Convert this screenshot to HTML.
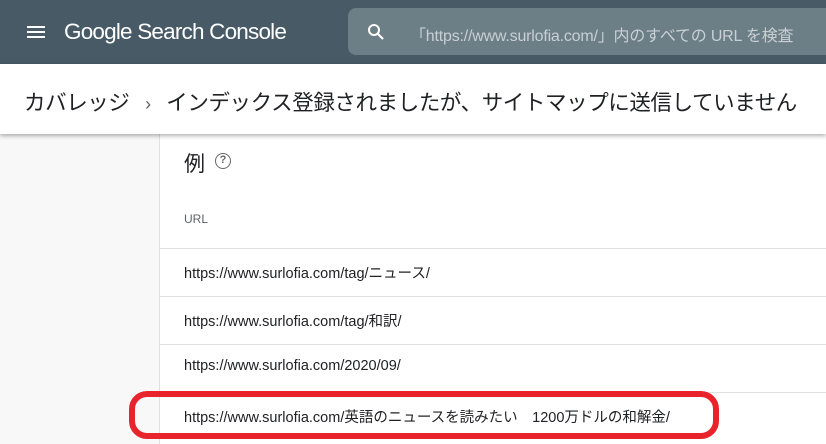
<!DOCTYPE html>
<html><head><meta charset="utf-8"><style>
*{margin:0;padding:0;box-sizing:border-box}
body{width:826px;height:440px;overflow:hidden;background:#f8f8f8;font-family:"Liberation Sans","Noto Sans CJK JP",sans-serif;position:relative}
.hdr{position:absolute;left:0;top:0;width:826px;height:64px;background:#475a65}
.menu{position:absolute;left:27px;top:26px;width:18px;height:12px;border-top:2px solid #fff;border-bottom:2px solid #fff}
.menu:after{content:"";position:absolute;left:0;top:3px;width:18px;height:2px;background:#fff}
.logo{position:absolute;left:64px;top:19px;color:#fff;font-size:22.5px;letter-spacing:-0.8px}
.search{position:absolute;left:348px;top:8px;width:490px;height:47px;background:#6c7e86;border-radius:8px}
.search .t{position:absolute;left:62px;top:14px;color:#c8d0d4;font-size:16px;letter-spacing:-0.2px}
.bc{position:absolute;left:0;top:64px;width:826px;height:70px;background:#fff;box-shadow:0 2px 4px rgba(0,0,0,.3);z-index:2}
.bc .t{position:absolute;left:24px;top:22px;font-size:21.5px;color:#202124;white-space:nowrap;letter-spacing:-0.4px}
.card{position:absolute;left:159px;top:134px;width:680px;height:310px;background:#fff;border-left:1px solid #e0e0e0}
.h{position:absolute;left:24px;top:14px;font-size:21px;color:#202124}
.q{position:absolute;left:55px;top:19px;width:16px;height:16px;border:1.6px solid #666;border-radius:50%;font-size:11px;line-height:13px;text-align:center;color:#666;font-weight:bold}
.urlh{position:absolute;left:24px;top:78px;font-size:12px;color:#5f6368}
.row{position:absolute;left:0;width:680px;height:48px;border-top:1px solid #e0e0e0}
.row span{position:absolute;left:24px;top:13px;font-size:14.5px;color:#202124;white-space:nowrap}
.oval{position:absolute;left:129px;top:391px;width:590px;height:48px;border:6px solid #e8232b;border-radius:18px;z-index:3}
</style></head><body>
<div class="hdr"><div class="menu"></div><div class="logo">Google Search Console</div>
<div class="search"><svg style="position:absolute;left:19px;top:15px" width="18" height="18" viewBox="0 0 18 18"><circle cx="7" cy="7" r="5" fill="none" stroke="#fff" stroke-width="2"/><path d="M11 11l5 5" stroke="#fff" stroke-width="2.2"/></svg><div class="t">「https://www.surlofia.com/」内のすべての URL を検査</div></div></div>
<div class="bc"><div class="t">カバレッジ <span style="font-size:18px;color:#5f6368;margin:0 10px">›</span> インデックス登録されましたが、サイトマップに送信していません</div></div>
<div class="card">
<div class="h">例</div><div class="q">?</div>
<div class="urlh">URL</div>
<div class="row" style="top:114px"><span>https://www.surlofia.com/tag/ニュース/</span></div>
<div class="row" style="top:162px"><span>https://www.surlofia.com/tag/和訳/</span></div>
<div class="row" style="top:210px"><span>https://www.surlofia.com/2020/09/</span></div>
<div class="row" style="top:258px"><span>https://www.surlofia.com/英語のニュースを読みたい　1200万ドルの和解金/</span></div>
</div>
<div class="oval"></div>
</body></html>
